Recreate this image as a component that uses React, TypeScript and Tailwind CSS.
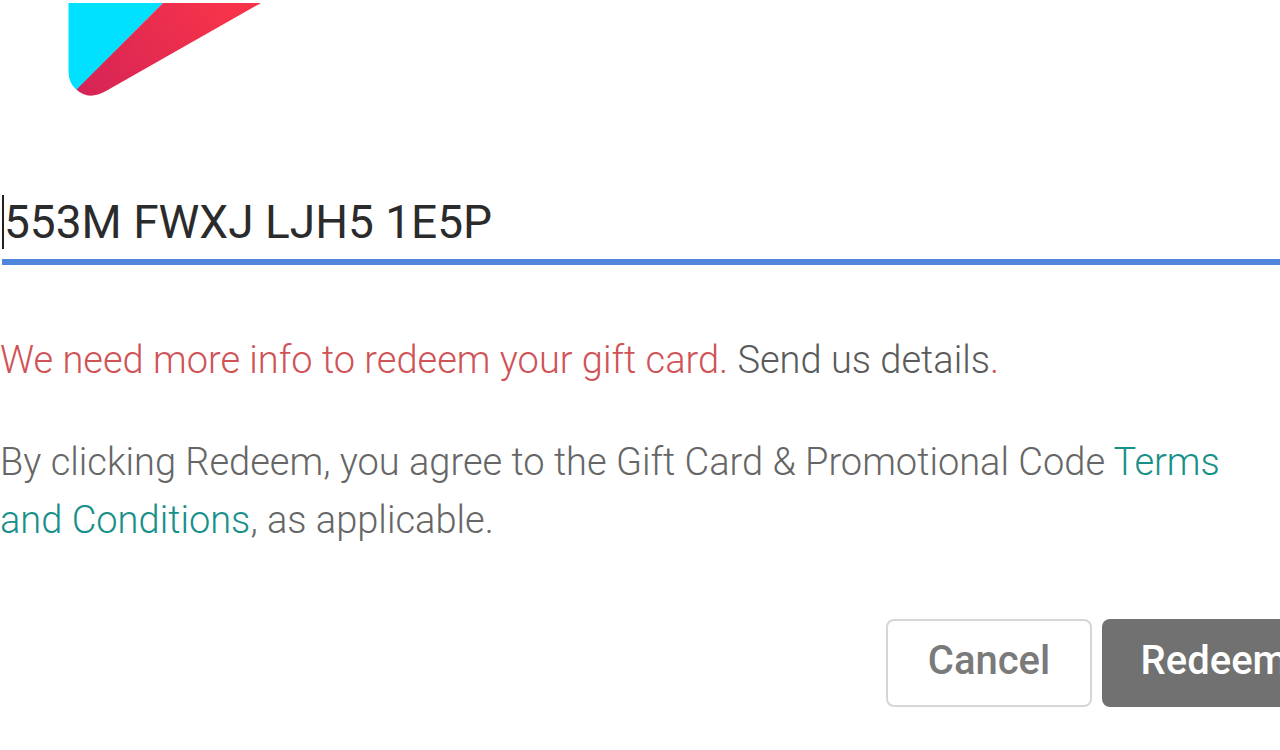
import { useState } from "react";

export default function App() {
  const [code, setCode] = useState("553M FWXJ LJH5 1E5P");

  return (
    <main className="overflow-hidden bg-white font-['Roboto',sans-serif] text-[#666666]">
      <form onSubmit={(e) => e.preventDefault()}>
        {/* Play logo */}
        <svg className="ml-17 mt-[3px] h-[94px] w-[194px]" viewBox="0 0 194 94" aria-hidden="true">
          <defs>
            <linearGradient id="playRed" x1="150" y1="0" x2="15" y2="94" gradientUnits="userSpaceOnUse">
              <stop offset="0" stopColor="#f6334a" />
              <stop offset="1" stopColor="#d52456" />
            </linearGradient>
          </defs>
          <path d="M0.5 0H95L8.500 87Q0.5 80 0.500 68Z" fill="#00e1ff" />
          <path d="M95 0H193L38 88Q20 98 8.500 86.500Z" fill="url(#playRed)" />
        </svg>

        <div className="mt-[98px] ml-0.5 flex h-[70px] items-start border-b-6 border-[#4f86dc]">
          <span className="h-[54px] w-0.5 shrink-0 bg-[#212121]" />
          <input
            aria-label="Gift card code"
            value={code}
            onChange={(e) => setCode(e.target.value)}
            className="h-[54px] min-w-0 flex-1 text-[46px] text-[#2b2b2b] outline-none"
          />
        </div>

        <p className="mt-[66px] text-[38px] leading-[58px] font-light text-[#cf5356]">
          We need more info to redeem your gift card.{" "}
          <a href="#" className="text-[#5a5a5a]">Send us details</a>.
        </p>
        <p className="mt-11 text-[38px] leading-[58px] font-light">
          By clicking Redeem, you agree to the Gift Card &amp; Promotional Code{" "}
          <a href="#" className="text-[#179089]">Terms and Conditions</a>, as applicable.
        </p>

        <div className="mt-[70px] mb-11 flex justify-end gap-[10px]">
          <button
            type="button"
            className="h-[88px] w-[206px] rounded-lg border-2 border-[#d6d6d6] pb-1 text-[40px] font-medium text-[#7a7a7a]"
          >
            Cancel
          </button>
          <button
            type="submit"
            className="-mr-[46px] h-[88px] w-[224px] rounded-lg bg-[#717171] pb-1 text-[40px] font-medium text-white"
          >
            Redeem
          </button>
        </div>
      </form>
    </main>
  );
}
